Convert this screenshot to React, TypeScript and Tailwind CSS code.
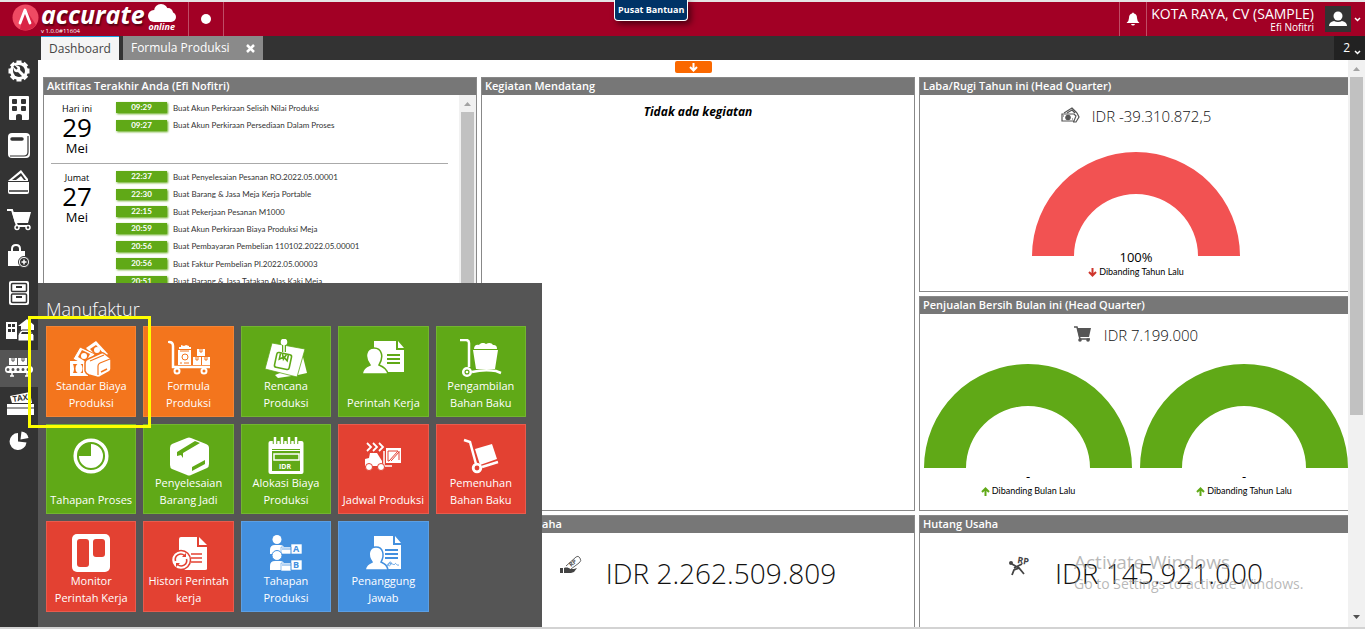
import React from "react";

type IconProps = { className?: string };

type TileProps = {
  label: string;
  tone: "orange" | "green" | "red" | "blue";
  icon: React.ReactNode;
};

const tones = {
  orange: "bg-[#f3751d] border-[#f58434] text-[#f3751d]",
  green: "bg-[#60a917] border-[#72b52f] text-[#60a917]",
  red: "bg-[#e34132] border-[#e95b4d] text-[#e34132]",
  blue: "bg-[#4390df] border-[#5b9fe4] text-[#4390df]",
};

// White shapes are cut out with currentColor, which is the tile colour
const TileSvg = ({ children }: { children: React.ReactNode }) => (
  <svg width="42" height="42" viewBox="0 0 42 42" fill="white" aria-hidden="true">
    {children}
  </svg>
);

const tiles: TileProps[] = [
  {
    label: "Standar Biaya Produksi",
    tone: "orange",
    icon: (
      <TileSvg>
        <path d="M16 9 26 2 38 15 28 22Z" />
        <path d="m20 10 6-4 7 8-6 4Z" fill="currentColor" />
        <circle cx="27" cy="11" r="3" />
        <path d="M3 20 10 8 25 15 18 28Z" stroke="currentColor" />
        <path d="m8 18 4-7 8 4-4 8Z" fill="currentColor" />
        <circle cx="14" cy="17" r="3" />
        <path d="M0 22h18v15H0z" />
        <path d="M3 25h10v9H3q2-4 0-9z" fill="currentColor" />
        <ellipse cx="9" cy="29.500" rx="3.500" ry="5" />
        <path
          d="M15 24q0-3 3-4l13-6q2-1 4 1l4 3q2 1 2 3v9q0 2-2 3l-9 5q-2 1-4 0l-7-2q-3-1-4-4Z"
          stroke="currentColor"
          strokeWidth="1.500"
        />
        <path d="m20 22 14-6M28 36v-9q0-2 2-3l10-4" stroke="currentColor" strokeWidth="1.200" fill="none" />
        <path d="m31 33 6-3" stroke="currentColor" strokeWidth="1.500" />
      </TileSvg>
    ),
  },
  {
    label: "Formula Produksi",
    tone: "orange",
    icon: (
      <TileSvg>
        <path d="M1 3c3 0 4 2 4 4v21h37" fill="none" stroke="white" strokeWidth="2.500" strokeLinecap="round" />
        <g fill="none" stroke="white" strokeWidth="2">
          <circle cx="9" cy="32" r="2.500" />
          <circle cx="36" cy="32" r="2.500" />
        </g>
        <path d="M11 8h12v2H11zM10 11h13v15H10zM13 6l3 1 2-1 3 1v1h-8z" />
        <circle cx="17" cy="18" r="3" fill="none" stroke="currentColor" />
        <path d="M12 12h9M12 24h2m2 0h5" stroke="currentColor" />
        <path d="M29 10h8v7h-8zM25 18h8v8h-8zM34 18h8v8h-8z" />
        <path d="M32 10v3h2v-3M28 18v3h2v-3M37 18v3h2v-3" fill="none" stroke="currentColor" />
      </TileSvg>
    ),
  },
  {
    label: "Rencana Produksi",
    tone: "green",
    icon: (
      <TileSvg>
        <path d="m37 14 5 20-9 2-20 3-3-3 20-8Z" />
        <path d="m7 4 33 6-8 28-32-8Z" stroke="currentColor" strokeWidth=".8" />
        <path d="M19 6v7" stroke="currentColor" strokeWidth="4" />
        <path d="M19 5v10" stroke="white" strokeWidth="1.500" />
        <circle cx="19" cy="3" r="3.300" />
        <g transform="rotate(12 18 22)" fill="none" stroke="currentColor" strokeWidth="1.600">
          <rect x="10.500" y="14.500" width="15" height="15" rx="2" />
          <path d="M14 15v6l4-3 4 3v-6M16 15l2 5 2-5" />
        </g>
      </TileSvg>
    ),
  },
  {
    label: "Perintah Kerja",
    tone: "green",
    icon: (
      <TileSvg>
        <path d="M12 2h22v9h8v22H12z" />
        <path d="m36 2 6 7h-6z" />
        <path d="M25 16h13M25 20h13M25 24h13" stroke="currentColor" strokeWidth="1.800" />
        <path
          d="M0 35c1-5 3-7 8-9-6-8-4-17 4-17s10 9 5 17c5 2 8 4 9 9Z"
          stroke="currentColor"
          strokeWidth="1.500"
        />
      </TileSvg>
    ),
  },
  {
    label: "Pengambilan Bahan Baku",
    tone: "green",
    icon: (
      <TileSvg>
        <path d="M0 1h6q3 0 3 3v24" fill="none" stroke="white" strokeWidth="2.500" />
        <circle cx="7" cy="33" r="3.800" fill="none" stroke="white" strokeWidth="2.500" />
        <circle cx="7" cy="33" r="1.300" />
        <path d="M12 33c8-2 18-2 24-1l5 2" fill="none" stroke="white" strokeWidth="2.500" />
        <path d="m13 11 3 19h19l3-19zM14 10c0-4 3-5 5-4 2-3 6-2 7-1 3-2 6-1 7 1 3 0 4 1 4 4z" />
      </TileSvg>
    ),
  },
  {
    label: "Tahapan Proses",
    tone: "green",
    icon: (
      <TileSvg>
        <circle cx="21" cy="19" r="15.800" fill="none" stroke="white" strokeWidth="3.500" />
        <path d="M21 7a12 12 0 1 1-12 12h12z" />
      </TileSvg>
    ),
  },
  {
    label: "Penyelesaian Barang Jadi",
    tone: "green",
    icon: (
      <TileSvg>
        <path d="M19 1q2-1 4 0l15 6q3 1 3 4v16q0 3-2 4l-16 7q-2 1-4 0L4 32q-2-1-2-4V11q0-3 2-4Z" />
        <path d="M9 15 27 4l5 2-17 10v5l-2-3-4 1ZM24 30l13-7v4l-13 7Z" fill="currentColor" />
      </TileSvg>
    ),
  },
  {
    label: "Alokasi Biaya Produksi",
    tone: "green",
    icon: (
      <TileSvg>
        <rect x="3.500" y="4" width="35" height="33" rx="2" />
        <path d="M10 1v6m7-6v6m7-6v6m7-6v6" stroke="currentColor" strokeWidth="4.500" />
        <path d="M10 0v7m7-7v7m7-7v7m7-7v7" stroke="white" strokeWidth="2.500" />
        <path d="M7 12.500h28" stroke="currentColor" />
        <path d="M7 14h28v20H7z" fill="currentColor" />
        <path d="M9 17h25v6H9z" fill="none" stroke="white" strokeWidth="1.500" />
        <text x="14" y="32" fontSize="7" fontWeight="700">
          IDR
        </text>
      </TileSvg>
    ),
  },
  {
    label: "Jadwal Produksi",
    tone: "red",
    icon: (
      <TileSvg>
        <path d="m5 6 4 4-4 4m6-8 4 4-4 4m6-8 4 4-4 4" fill="none" stroke="white" strokeWidth="1.800" />
        <path d="M8 16h7l5 8v5H3v-7l4-1z" />
        <path d="M22 14v15h8" fill="none" stroke="white" strokeWidth="1.500" />
        <circle cx="7" cy="30" r="3.500" stroke="currentColor" />
        <circle cx="19" cy="30" r="3.500" stroke="currentColor" />
        <path d="M24 11h15v15H24z" />
        <path d="M26 14v10h1l9-10zM37 14v9m-8 1 8-9" fill="none" stroke="currentColor" />
      </TileSvg>
    ),
  },
  {
    label: "Pemenuhan Bahan Baku",
    tone: "red",
    icon: (
      <TileSvg>
        <path d="m4 3 6 2 6 22m6 3 16-5" fill="none" stroke="white" strokeWidth="2.500" />
        <circle cx="17" cy="31" r="3.800" fill="none" stroke="white" strokeWidth="2.800" />
        <path d="m15 12 17-5 5 15-17 6Z" />
      </TileSvg>
    ),
  },
  {
    label: "Monitor Perintah Kerja",
    tone: "red",
    icon: (
      <TileSvg>
        <rect x="2" width="38" height="38" rx="5" />
        <rect x="7" y="5" width="12" height="28" rx="3" fill="currentColor" />
        <rect x="23" y="5" width="12" height="18" rx="3" fill="currentColor" />
      </TileSvg>
    ),
  },
  {
    label: "Histori Perintah kerja",
    tone: "red",
    icon: (
      <TileSvg>
        <path d="M13 3h16v10h10v22q0 1-2 1H11V5q0-2 2-2ZM31 3l8 8h-8z" />
        <path d="M23 20h11M23 24h11M23 28h11" stroke="currentColor" strokeWidth="1.600" />
        <circle cx="13" cy="26" r="9.500" stroke="currentColor" strokeWidth="1.500" />
        <path
          d="M7.500 27a5.500 5.500 0 0 1 9-5.500M18.500 25a5.500 5.500 0 0 1-9 5.500"
          fill="none"
          stroke="currentColor"
          strokeWidth="1.600"
        />
        <path d="m18 19v4h-4zM8 33v-4h4z" fill="currentColor" />
      </TileSvg>
    ),
  },
  {
    label: "Tahapan Produksi",
    tone: "blue",
    icon: (
      <TileSvg>
        <circle cx="12" cy="5.500" r="4.500" />
        <path d="M5 20v-4q0-5 5-5h5q4 0 5 4v5z" />
        <path d="M16 13h10v7H16zM26 10h11v10H26z" stroke="currentColor" strokeWidth=".6" />
        <circle cx="12" cy="21.500" r="5" stroke="currentColor" />
        <path d="M5 36v-4q0-5 5-5h5q4 0 5 4v5z" />
        <path d="M16 29h10v8H16zM26 26h11v10H26z" stroke="currentColor" strokeWidth=".6" />
        <path d="M17 15h9M17 31h9" stroke="currentColor" strokeWidth=".8" />
        <g fontSize="9" fontWeight="700" fill="currentColor">
          <text x="28" y="18">A</text>
          <text x="28" y="34">B</text>
        </g>
      </TileSvg>
    ),
  },
  {
    label: "Penanggung Jawab",
    tone: "blue",
    icon: (
      <TileSvg>
        <path d="M12 2h19v9h8v24H12zM33 2l6 7h-6z" />
        <path d="M23 16h13M23 20h13M23 24h13" stroke="currentColor" strokeWidth="1.800" />
        <path d="M25 32c2-5 5-5 4-2s-4 2-2 0 5 2 6 0 1 2 4 1" fill="none" stroke="currentColor" strokeWidth=".8" />
        <path
          d="M3 36c1-5 3-6 7-8-5-7-3-15 4-15s9 8 5 15c4 2 6 3 7 8Z"
          stroke="currentColor"
          strokeWidth="1.500"
        />
      </TileSvg>
    ),
  },
];

const NavSvg = ({ children }: { children: React.ReactNode }) => (
  <svg width="30" height="26" viewBox="0 0 30 26" fill="white" aria-hidden="true">
    {children}
  </svg>
);

const cut = "#333";

const navItems = [
  {
    label: "Pengaturan",
    icon: (
      <NavSvg>
        <g stroke="white" strokeWidth="5">
          <path d="M15 2.500v21M4.500 13h21M7.600 5.600l14.800 14.800M22.400 5.600 7.600 20.400" />
        </g>
        <circle cx="15" cy="13" r="9" />
        <circle cx="15" cy="13" r="6" fill={cut} />
        <path d="m13.500 11.500 5.500 5.500" stroke="white" strokeWidth="3" strokeLinecap="round" />
        <circle cx="13" cy="11" r="3.200" />
        <path d="m10 8 3 3" stroke={cut} strokeWidth="2" />
      </NavSvg>
    ),
  },
  {
    label: "Perusahaan",
    icon: (
      <NavSvg>
        <rect x="5" y="1" width="20" height="24" rx="1" />
        <g fill={cut}>
          <rect x="8" y="4" width="5" height="5" rx="1" />
          <rect x="17" y="4" width="5" height="5" rx="1" />
          <rect x="8" y="11" width="5" height="5" rx="1" />
          <rect x="17" y="11" width="5" height="5" rx="1" />
          <path d="M12 25v-4q0-2 3-2t3 2v4z" />
        </g>
      </NavSvg>
    ),
  },
  {
    label: "Buku Besar",
    icon: (
      <NavSvg>
        <rect x="4" y="1" width="22" height="25" rx="4" />
        <path d="M6 24h14q4 0 4-4V4" fill="none" stroke={cut} strokeWidth="1.200" />
        <path d="M8 7h10" stroke={cut} strokeWidth="3.500" strokeLinecap="round" />
      </NavSvg>
    ),
  },
  {
    label: "Kas & Bank",
    icon: (
      <NavSvg>
        <path d="m5 11 12-10 7 9v2H4z" />
        <path d="m8 11 9-7 5 7" fill={cut} />
        <path d="m12 11 5-4 3 4" />
        <path d="M4 13h21v10q0 2-2 2H6q-2 0-2-2z" />
        <path d="M5 22h19" stroke={cut} strokeWidth="1.500" />
      </NavSvg>
    ),
  },
  {
    label: "Penjualan",
    icon: (
      <NavSvg>
        <path d="M3 4h5l5 16h13" fill="none" stroke="white" strokeWidth="2" />
        <path d="M8 6h19l-3 11H11z" />
        <g fill={cut} stroke="white" strokeWidth="1.500">
          <circle cx="13" cy="21.500" r="2" />
          <circle cx="24" cy="21.500" r="2" />
        </g>
      </NavSvg>
    ),
  },
  {
    label: "Pembelian",
    icon: (
      <NavSvg>
        <path d="M8 9V6q0-4 4-4t4 4v3" fill="none" stroke="white" strokeWidth="2" />
        <path d="M4 8h17v15H4z" />
        <circle cx="20" cy="19" r="5.500" stroke={cut} />
        <circle cx="20" cy="19" r="4" fill={cut} />
        <path d="M20 16.500v5m-2.500-2.500h5" stroke="white" strokeWidth="1.500" />
      </NavSvg>
    ),
  },
  {
    label: "Persediaan",
    icon: (
      <NavSvg>
        <rect x="5" y="1" width="20" height="24" rx="2" />
        <g fill="none" stroke={cut} strokeWidth="1.500">
          <rect x="7.500" y="3.500" width="15" height="8" rx="1" />
          <rect x="7.500" y="14" width="15" height="8.500" rx="1" />
        </g>
        <path d="M12 7h6M12 17h6" stroke={cut} strokeWidth="2" />
      </NavSvg>
    ),
  },
  {
    label: "Aset Tetap",
    icon: (
      <NavSvg>
        <path d="M2 5h11v17H2z" />
        <path d="M4 7h3v3H4zM8 7h3v3H8zM4 12h3v3H4zM8 12h3v3H8z" fill={cut} />
        <path d="m14 9 9-7 7 6v5H17V9z" />
        <path d="M14 18q2-5 4-5h8l4 5v6H14z" stroke={cut} />
        <path d="M18 15h9l1 2H17z" fill={cut} />
      </NavSvg>
    ),
  },
  {
    label: "Manufaktur",
    icon: (
      <NavSvg>
        <path d="M5 4h8v7H5zM14 4h9v7h-9zM24 6h3v5h-3z" />
        <path d="M8 4v3h2V4M18 4v3h2V4" fill="none" stroke="#555" />
        <rect x="1" y="12" width="28" height="7" rx="3.500" />
        <path d="M4 15.500h24" stroke="#555" strokeWidth="3" strokeLinecap="round" strokeDasharray="0 5" />
        <path d="M8 19v3m-2 0h4M23 19v3m-2 0h4" stroke="white" strokeWidth="1.500" />
      </NavSvg>
    ),
  },
  {
    label: "Pajak",
    icon: (
      <NavSvg>
        <path d="m6 5 20-4 2 11H8z" />
        <text x="9" y="11" fontSize="8" fontWeight="700" fill={cut} transform="rotate(-8 9 11)">
          TAX
        </text>
        <path d="M3 13h27v11H3z" />
        <path d="M3 17h27" stroke={cut} />
      </NavSvg>
    ),
  },
  {
    label: "Laporan",
    icon: (
      <NavSvg>
        <path d="M14 5a8.500 8.500 0 1 0 8.500 9.500L14 13.500z" />
        <path d="m16.500 11.500 1-8a8 8 0 0 1 7 6.500z" />
      </NavSvg>
    ),
  },
];

const activities = [
  {
    day: "Hari ini",
    date: "29",
    month: "Mei",
    listHeight: "h-[35px]",
    items: [
      { time: "09:29", text: "Buat Akun Perkiraan Selisih Nilai Produksi" },
      { time: "09:27", text: "Buat Akun Perkiraan Persediaan Dalam Proses" },
    ],
  },
  {
    day: "Jumat",
    date: "27",
    month: "Mei",
    listHeight: "h-[122px]",
    items: [
      { time: "22:37", text: "Buat Penyelesaian Pesanan RO.2022.05.00001" },
      { time: "22:30", text: "Buat Barang & Jasa Meja Kerja Portable" },
      { time: "22:15", text: "Buat Pekerjaan Pesanan M1000" },
      { time: "20:59", text: "Buat Akun Perkiraan Biaya Produksi Meja" },
      { time: "20:56", text: "Buat Pembayaran Pembelian 110102.2022.05.00001" },
      { time: "20:56", text: "Buat Faktur Pembelian PI.2022.05.00003" },
      { time: "20:51", text: "Buat Barang & Jasa Tatakan Alas Kaki Meja" },
    ],
  },
];

const Panel = ({
  title,
  className = "",
  children,
}: {
  title: string;
  className?: string;
  children?: React.ReactNode;
}) => (
  <section className={`flex flex-col overflow-hidden border border-[#888] bg-white ${className}`}>
    <h2 className="h-[17px] shrink-0 bg-[#777] px-[3px] text-[11px] leading-4 font-semibold text-white">{title}</h2>
    {children}
  </section>
);

const ScrollTrack = ({ thumb, down }: { thumb: string; down?: boolean }) => (
  <div className="flex w-[17px] shrink-0 flex-col items-center bg-[#f1f1f1]">
    <svg width="9" height="17" viewBox="0 0 9 17" className="shrink-0" aria-hidden="true">
      <path d="m1 11 3.500-4L8 11z" fill="#a3a3a3" />
    </svg>
    <div className={`w-[13px] bg-[#c1c1c1] ${thumb}`} />
    {down && (
      <svg width="9" height="19" viewBox="0 0 9 19" className="mt-auto shrink-0" aria-hidden="true">
        <path d="m1 7 3.500 4L8 7z" fill="#505050" />
      </svg>
    )}
  </div>
);

const Gauge = ({
  color,
  value,
  label,
  up,
  lowered,
}: {
  color: string;
  value: string;
  label: string;
  up?: boolean;
  lowered?: boolean;
}) => (
  <div className="flex w-1/2 flex-col items-center">
    <div className={`h-[104px] ${lowered ? "pt-[7px]" : ""}`}>
      <svg width="208" height="104" viewBox="0 0 208 104" aria-hidden="true">
        <path d="M0 104a104 104 0 0 1 208 0h-42a62 62 0 0 0-124 0z" fill={color} />
      </svg>
    </div>
    <span className="relative text-[13px] leading-4 text-black">{value}</span>
    <span className="flex items-center gap-[2px] font-['Lato',sans-serif] text-[9px] leading-[14px] whitespace-nowrap text-black">
      <svg width="9" height="9" viewBox="0 0 9 9" fill="none" strokeWidth="2" aria-hidden="true">
        <path
          d={up ? "M4.500 9V2M1 5l3.500-3.500L8 5" : "M4.500 0v7M1 4l3.500 3.500L8 4"}
          stroke={up ? "#60a917" : "#ce352c"}
        />
      </svg>
      {label}
    </span>
  </div>
);

const MoneyIcon = () => (
  <svg width="19" height="16" viewBox="0 0 19 16" fill="none" stroke="#555" strokeWidth="1.200" aria-hidden="true">
    <path d="m3 6 8-5 5 5M6 6l5-3 3 3" />
    <path d="M1 7h12l2 2-2 5H1zM16 6l2 4-3 5h-3" />
    <circle cx="7" cy="10.500" r="2.200" fill="#555" />
    <path d="M2 9h1m8 3h1" />
  </svg>
);

const CartIcon = () => (
  <svg width="18" height="17" viewBox="0 0 18 17" fill="#555" aria-hidden="true">
    <path d="M3 2h14l-2 9H5z" />
    <path d="M0 1h3l3 12h10" fill="none" stroke="#555" strokeWidth="1.500" />
    <circle cx="6" cy="14" r="1.800" />
    <circle cx="14" cy="14" r="1.800" />
  </svg>
);

const HandMoneyIcon = () => (
  <svg width="22" height="20" viewBox="0 0 22 20" aria-hidden="true">
    <path d="M0 13h3v5H0zM4 13c3-1 5 0 7 1h3l3-1-3 4-3 1H4z" fill="#444" />
    <path d="m6 11 10-9q2-2 4 1t-1 5l-8 6" fill="white" stroke="#666" />
    <text x="11" y="12" fontSize="6" fontWeight="700" fill="#555" transform="rotate(-38 11 12)">
      RP
    </text>
  </svg>
);

const RunnerIcon = () => (
  <svg width="22" height="22" viewBox="0 0 22 22" aria-hidden="true">
    <circle cx="2" cy="8" r="2" fill="#444" />
    <path d="m3 9 7 4 5 6M10 13l-5 2-2 5M5 13l8-4" fill="none" stroke="#444" strokeWidth="1.800" />
    <text x="8" y="8" fontSize="9" fontWeight="700" fill="#444" transform="rotate(9 8 8)">
      RP
    </text>
  </svg>
);

const Logo = () => (
  <div className="flex h-full w-[188px] shrink-0 pl-3 text-white">
    <svg width="27" height="27" viewBox="0 0 27 27" className="mt-[2px]" aria-hidden="true">
      <circle cx="13.500" cy="13.500" r="13" fill="#ef4a63" />
      <path d="M13 4 24 21a13 13 0 0 1-16 4z" fill="#d92546" />
      <path d="m8 19 5-13 5 13" fill="none" stroke="white" strokeWidth="2.800" strokeLinecap="round" strokeLinejoin="round" />
    </svg>
    <div className="flex flex-col pl-[2px]">
      <span className="h-[25px] text-[25px] leading-6 font-bold italic [text-shadow:1px_2px_2px_#500010]">accurate</span>
      <span className="text-[6px] leading-[8px]">v 1.0.0#11604</span>
    </div>
    <div className="flex flex-col items-center pt-[2px] pl-[3px]">
      <svg width="28" height="18" viewBox="0 0 28 18" fill="white" aria-hidden="true">
        <circle cx="6" cy="12" r="6" />
        <circle cx="13" cy="7" r="7" />
        <circle cx="20" cy="9" r="5" />
        <circle cx="23" cy="13" r="5" />
        <path d="M6 11h17v7H6z" />
      </svg>
      <span className="text-[9px] leading-[10px] font-bold italic">online</span>
    </div>
  </div>
);

const Chevron = ({ className }: IconProps) => (
  <svg width="7" height="5" viewBox="0 0 7 5" className={className} fill="none" stroke="white" strokeWidth="1.500" aria-hidden="true">
    <path d="m1 1 2.500 2.500L6 1" />
  </svg>
);

const Header = () => (
  <header className="flex h-9 shrink-0 border-t-2 border-[#e5e5e5] bg-[#a20025] text-white">
    <Logo />
    <button aria-label="Status" className="flex w-9 items-center justify-center border-x border-[#bf4d66]">
      <span className="size-[10px] rounded-full bg-white" />
    </button>
    <button
      aria-label="Notifikasi"
      className="ml-auto flex w-7 items-center justify-center border-x border-[#bf4d66]"
    >
      <svg width="14" height="14" viewBox="0 0 14 14" fill="white" aria-hidden="true">
        <path d="M6 1.500Q7-.5 8 1.500q3 .5 3 4.500 0 3 2.500 5H.5Q3 9 3 6q0-4 3-4.500ZM5 12h4q-.5 1.500-2 1.500T5 12Z" />
      </svg>
    </button>
    <div className="flex flex-col items-end pt-1 pl-1">
      <span className="text-sm leading-4">KOTA RAYA, CV (SAMPLE)</span>
      <span className="text-[10px] leading-[10px]">Efi Nofitri</span>
    </div>
    <button aria-label="Akun" className="flex items-center pl-[11px] pr-1">
      <span className="flex size-[26px] items-center justify-center bg-[#333]">
        <svg width="18" height="16" viewBox="0 0 18 16" fill="white" aria-hidden="true">
          <circle cx="9" cy="5" r="4.500" />
          <path d="M0 15q0-4 5-5 4 2 8 0 5 1 5 5z" />
        </svg>
      </span>
      <Chevron className="ml-[3px]" />
    </button>
  </header>
);

const TabBar = () => (
  <div className="flex h-6 shrink-0 bg-[#333] pl-[3px] text-xs">
    <button className="mr-1 border-t border-[#1ba1e2] bg-[#f5f5f5] px-2 text-[#444]">Dashboard</button>
    <button className="flex items-center bg-[#8a8a8a] px-2 text-white">
      Formula Produksi
      <svg width="9" height="9" viewBox="0 0 9 9" className="ml-4" aria-hidden="true">
        <path d="m1 1 7 7M8 1 1 8" stroke="white" strokeWidth="2.500" />
      </svg>
    </button>
    <button className="ml-auto flex w-[31px] items-center justify-end gap-1 bg-[#222] pr-1 text-white">
      2 <Chevron className="mt-2" />
    </button>
  </div>
);

const ActivityPanel = () => (
  <Panel title="Aktifitas Terakhir Anda (Efi Nofitri)" className="row-span-2">
    <div className="flex min-h-0 grow">
      <div className="min-w-0 grow overflow-hidden pr-[11px] pl-[7px]">
        {activities.map((group) => (
          <div key={group.date} className="flex h-[69px] border-b border-[#aaa] pt-1 last:h-auto last:border-0">
            <div className="flex w-[52px] shrink-0 flex-col items-center pt-1 text-black">
              <span className="text-[9px] leading-[12px]">{group.day}</span>
              <span className="text-[26px] leading-6">{group.date}</span>
              <span className="text-[13px] leading-[18px]">{group.month}</span>
            </div>
            <ul className={`ml-[13px] grid auto-rows-fr ${group.listHeight}`}>
              {group.items.map((item) => (
                <li
                  key={item.time + item.text}
                  className="flex items-center gap-[6px] font-['Lato',sans-serif] text-[8px] whitespace-nowrap text-[#333]"
                >
                  <span className="h-[11px] w-[51px] bg-[#60a917] text-center leading-[11px] font-bold text-white shadow-[1px_1px_2px_#60a917]">
                    {item.time}
                  </span>
                  {item.text}
                </li>
              ))}
            </ul>
          </div>
        ))}
      </div>
      <ScrollTrack thumb="grow" />
    </div>
  </Panel>
);

const MenuPanel = () => (
  <nav aria-label="Manufaktur" className="absolute top-[283px] bottom-0 left-[38px] w-[504px] bg-[#555] px-2 pt-[13px]">
    <h2 className="h-[30px] text-lg leading-[26px] font-light text-white">Manufaktur</h2>
    <div className="grid h-[286px] w-[480px] grid-cols-5 grid-rows-3 gap-[7px]">
      {tiles.map((tile) => (
        <button
          key={tile.label}
          className={`flex flex-col items-center border pt-3 pb-[5px] ${tones[tile.tone]}`}
        >
          <span className="h-0">{tile.icon}</span>
          <span className="mt-auto w-[84px] text-[11px] leading-[17px] text-white">{tile.label}</span>
        </button>
      ))}
    </div>
  </nav>
);

const App = () => {
  return (
    <div className="relative flex h-screen flex-col overflow-hidden border-b-2 border-[#d3d3d3] bg-white font-['Open_Sans','Noto_Sans',sans-serif]">
      <Header />
      <button className="absolute top-0 left-[45%] h-[21px] w-[74px] rounded-b border border-t-0 border-white bg-[#036] text-[9px] font-bold text-white shadow-[3px_3px_6px_#0008]">
        Pusat Bantuan
      </button>

      <div className="flex min-h-0 grow">
        <aside className="flex w-[38px] shrink-0 flex-col bg-[#333] pt-[18px]">
          {navItems.map((item) => (
            <button
              key={item.label}
              aria-label={item.label}
              className={`flex h-[37px] shrink-0 items-center justify-center pb-1 ${
                item.label === "Manufaktur" ? "bg-[#555]" : ""
              }`}
            >
              {item.icon}
            </button>
          ))}
        </aside>

        <div className="flex min-w-0 grow flex-col">
          <TabBar />
          <div className="flex min-h-0 grow">
            <main className="min-w-0 grow overflow-hidden pl-[5px]">
              <div className="flex h-[17px] justify-center pt-px pr-[5px]">
                <button
                  aria-label="Tampilkan"
                  className="flex h-3 w-[37px] items-center justify-center rounded-xs bg-[#fa6800]"
                >
                  <svg width="9" height="9" viewBox="0 0 9 9" fill="none" stroke="white" strokeWidth="2" aria-hidden="true">
                    <path d="M4.500 0v7M1 4l3.500 3.500L8 4" />
                  </svg>
                </button>
              </div>
              <div className="-mr-[5px] grid auto-rows-[215px] grid-cols-3 gap-1">
                <ActivityPanel />
                <Panel title="Kegiatan Mendatang" className="row-span-2">
                  <p className="pt-2 text-center text-xs leading-[18px] font-bold text-black italic">
                    Tidak ada kegiatan
                  </p>
                </Panel>
                <Panel title="Laba/Rugi Tahun ini (Head Quarter)">
                  <div className="flex h-[50px] shrink-0 items-start justify-center gap-3 pt-3 text-[15px] leading-[18px] font-light text-[#111]">
                    <MoneyIcon />
                    IDR -39.310.872,5
                  </div>
                  <div className="flex justify-center">
                    <Gauge color="#f25252" value="100%" label="Dibanding Tahun Lalu" lowered />
                  </div>
                </Panel>
                <Panel title="Penjualan Bersih Bulan ini (Head Quarter)">
                  <div className="flex h-[50px] shrink-0 items-start justify-center gap-3 pt-3 text-[15px] leading-[18px] font-light text-[#111]">
                    <CartIcon />
                    IDR 7.199.000
                  </div>
                  <div className="flex">
                    <Gauge color="#60a917" value="-" label="Dibanding Bulan Lalu" up />
                    <Gauge color="#60a917" value="-" label="Dibanding Tahun Lalu" up />
                  </div>
                </Panel>
                <Panel title="Kas & Bank" />
                <Panel title="Piutang Usaha">
                  <div className="flex items-start justify-center gap-6 pt-[22px] text-[28px] leading-9 font-light text-[#111]">
                    <HandMoneyIcon />
                    IDR 2.262.509.809
                  </div>
                </Panel>
                <Panel title="Hutang Usaha">
                  <div className="flex items-start justify-center gap-6 pt-[22px] text-[28px] leading-9 font-light text-[#111]">
                    <RunnerIcon />
                    IDR 145.921.000
                  </div>
                </Panel>
              </div>
            </main>
            <ScrollTrack thumb="h-[338px]" down />
          </div>
        </div>
      </div>

      <MenuPanel />
      <div className="pointer-events-none absolute top-[316px] left-[28px] h-[112px] w-[123px] border-3 border-[#ff0]" />
      <div className="pointer-events-none absolute right-14 bottom-[33px] w-[235px] whitespace-nowrap text-[#999]/70">
        <p className="text-[19px] leading-6">Activate Windows</p>
        <p className="text-sm leading-5">Go to Settings to activate Windows.</p>
      </div>
    </div>
  );
};

export default App;
